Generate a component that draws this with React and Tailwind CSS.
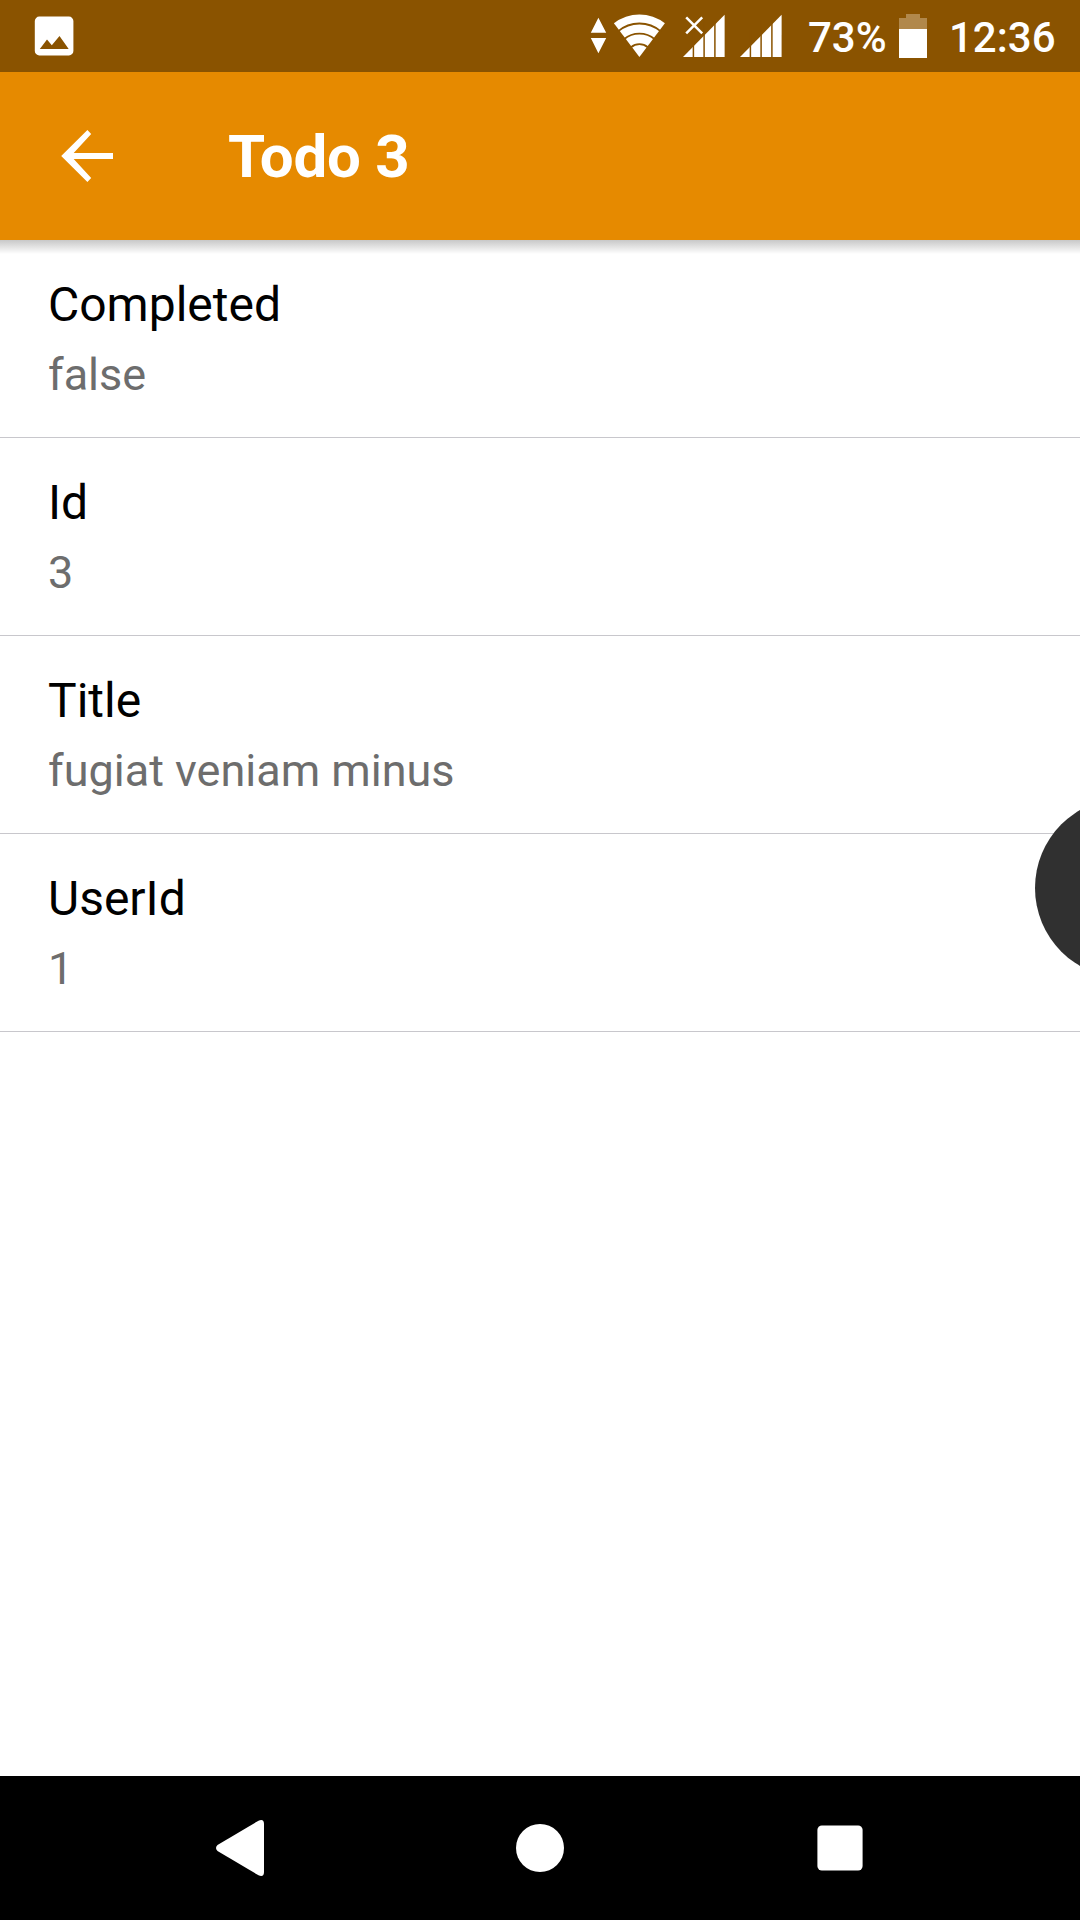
const FIELDS = [
  { label: "Completed", value: "false" },
  { label: "Id", value: "3" },
  { label: "Title", value: "fugiat veniam minus" },
  { label: "UserId", value: "1" },
];

function ImageIcon() {
  return (
    <svg className="ml-[34px] h-10 w-10" viewBox="34 16 40 40">
      <rect x="34.8" y="16.6" width="38.6" height="38.8" rx="4.5" fill="#fff" />
      <path d="M39.8 49 47 39.5 51.8 45.3 59.5 36 68.7 49Z" fill="#8a5300" />
    </svg>
  );
}

function WifiIcon() {
  return (
    <svg className="h-12 w-[76px]" viewBox="590 12 76 48">
      <path d="M598.4 17.7 606.2 32.8H590.8Z M590.8 38H606.2L598.4 53.3Z" fill="#fff" />
      <path d="M639.4 57 613.9 23.3A41.5 41.5 0 0 1 664.9 23.3Z" fill="#fff" />
      <g fill="none" stroke="#8a5300" strokeWidth="1.8">
        <path d="M618 31.4A33 33 0 0 1 660.8 31.4" />
        <path d="M624 39.2A24 24 0 0 1 654.8 39.2" />
        <path d="M631 47.2A13 13 0 0 1 647.8 47.2" />
      </g>
    </svg>
  );
}

function SignalIcon({ className, crossed }) {
  return (
    <svg className={className} viewBox="0 12 42 48">
      <path d="M0 57 41.6 14.8V57Z" fill="#fff" />
      <path d="M10.4 30V58M21.1 20V58M31.9 14V58" stroke="#8a5300" strokeWidth="1.5" />
      {crossed && <path d="M3.2 17.3 19.2 33.4M19.2 17.3 3.2 33.4" stroke="#fff" strokeWidth="2.5" />}
    </svg>
  );
}

function BatteryIcon() {
  return (
    <svg className="ml-[13px] h-12 w-7" viewBox="899 12 28 48">
      <path d="M906 14H920V18H927V29H899V18H906Z" fill="#b1884b" />
      <path d="M899 29H927V58H899Z" fill="#fff" />
    </svg>
  );
}

function StatusBar() {
  return (
    <div className="flex h-[72px] items-center justify-between bg-[#8a5300] text-[42px] leading-[48px] font-medium text-white">
      <ImageIcon />
      <div className="flex w-[490px] items-center">
        <WifiIcon />
        <SignalIcon className="ml-[17px] h-12 w-[42px]" crossed />
        <SignalIcon className="ml-[15px] h-12 w-[42px]" />
        <span className="ml-[26px] w-[78px] pt-[3px]">73%</span>
        <BatteryIcon />
        <span className="ml-[22px] pt-[3px]">12:36</span>
      </div>
    </div>
  );
}

function Header() {
  return (
    <header className="flex h-[168px] items-center bg-[#e68a00] text-white">
      <svg className="ml-[61px] h-[52px] w-[52px]" viewBox="61 130 52 52">
        <path
          d="M61.2 156 87.4 130.1 91.2 134 73.7 153H113V159H73.7L91.2 178 87.4 181.9Z"
          fill="#fff"
        />
      </svg>
      <h1 className="ml-[115px] pt-[2px] text-[60px] leading-[70px] font-bold tracking-[-0.25px]">Todo 3</h1>
    </header>
  );
}

export default function App() {
  return (
    <div className="relative flex h-[1920px] w-[1080px] flex-col overflow-hidden bg-white font-[Roboto,sans-serif]">
      <StatusBar />
      <Header />
      <main className="relative grow">
        <div className="absolute inset-x-0 top-0 h-[14px] bg-linear-to-b from-[#c8c8c8] to-white" />
        {FIELDS.map(({ label, value }) => (
          <div key={label} className="h-[198px] border-b border-[#c8c7cc] pt-[37px] pl-12">
            <div className="text-[48px] leading-[56px] text-black">{label}</div>
            <div className="mt-4 text-[45px] leading-[52px] text-[#6d6d6d]">{value}</div>
          </div>
        ))}
      </main>
      <nav className="flex h-36 items-center bg-black px-[90px]">
        <div className="flex w-[300px] justify-center">
          <svg className="h-14 w-12" viewBox="0 0 48 56">
            <path d="M1.5 25 42.5 .7Q48-1.5 48 4V52Q48 57.5 42.5 55.3L1.5 31Q-1.5 28 1.5 25Z" fill="#fff" />
          </svg>
        </div>
        <div className="flex w-[300px] justify-center">
          <div className="h-12 w-12 rounded-full bg-white" />
        </div>
        <div className="flex w-[300px] justify-center">
          <svg className="h-12 w-12" viewBox="0 0 48 48">
            <rect x="1.4" y="1.4" width="45.2" height="45.2" rx="4.5" fill="#fff" />
          </svg>
        </div>
      </nav>
      <div className="absolute top-[798px] left-[1035px] h-[180px] w-[180px] rounded-full bg-[#303030]" />
    </div>
  );
}
